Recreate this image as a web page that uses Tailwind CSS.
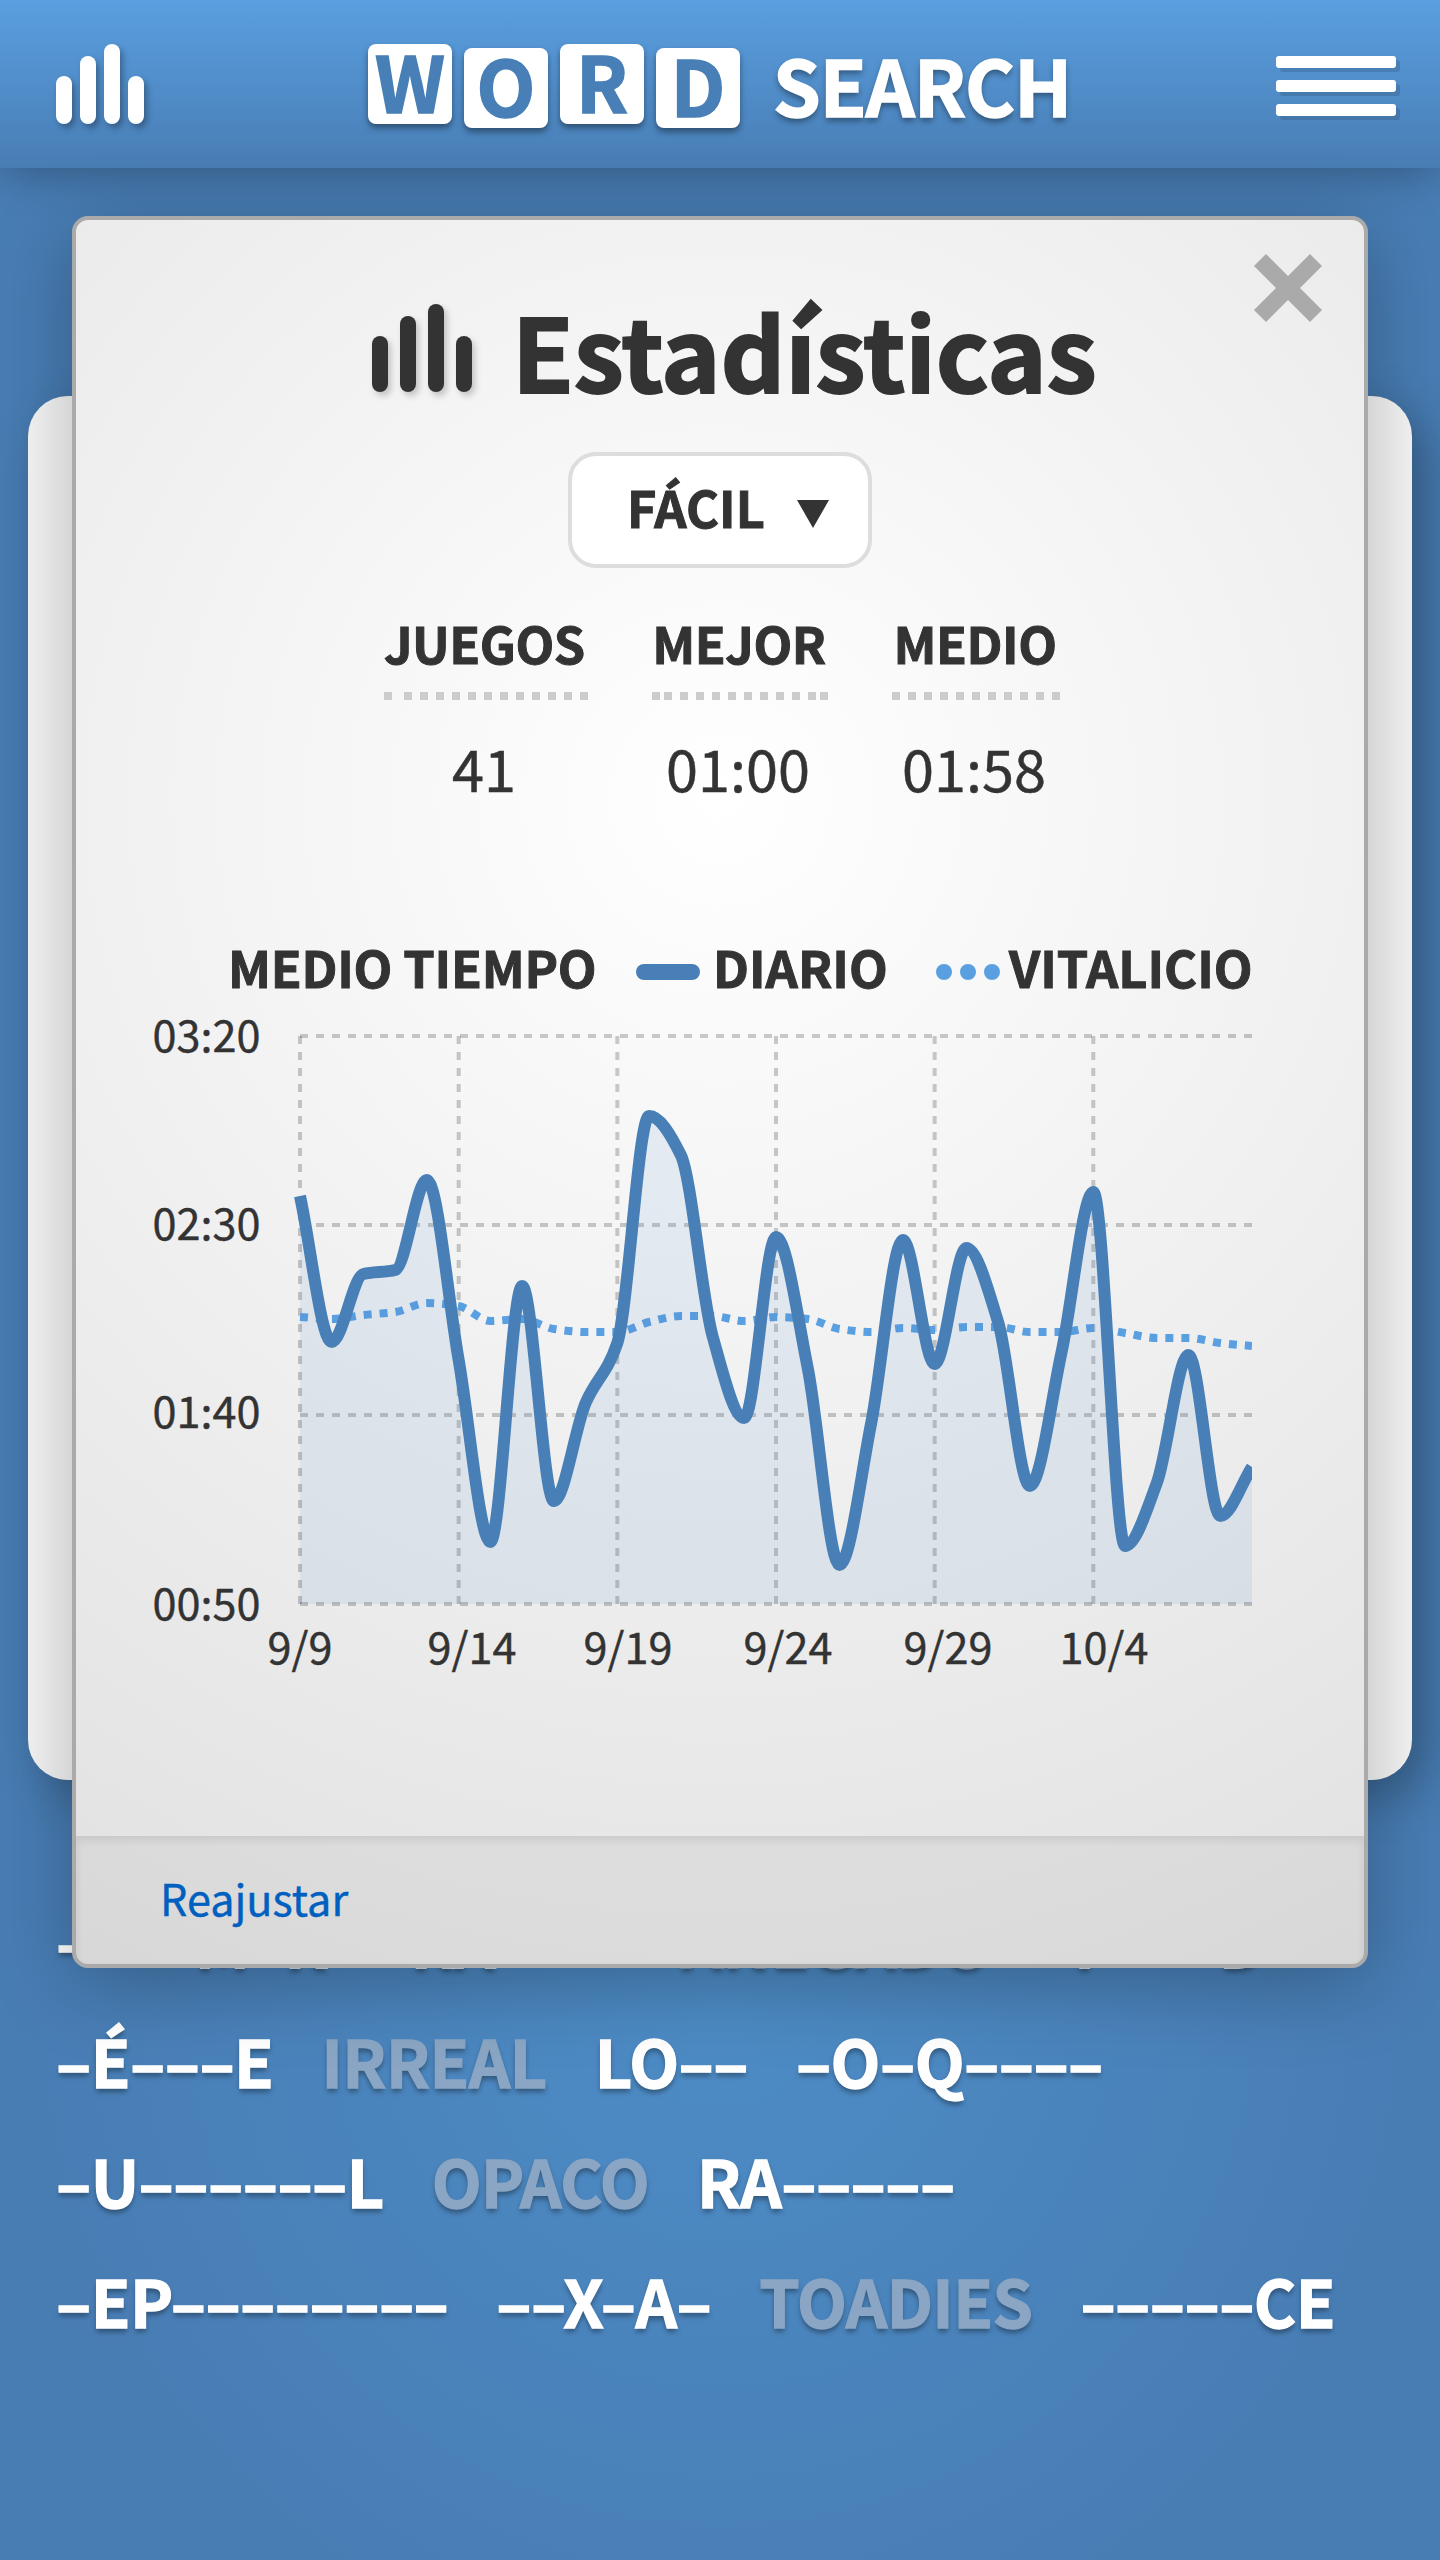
<!DOCTYPE html>
<html lang="es">
<head>
    <meta charset="UTF-8">
    <meta name="viewport" content="width=device-width, initial-scale=1.0">
    <title>Word Search - Estadísticas</title>
    <script src="https://cdn.jsdelivr.net/npm/@tailwindcss/browser@4"></script>
</head>
<body class="relative w-[1440px] h-[2560px] overflow-hidden font-['Noto_Sans_CJK_SC','Open_Sans',sans-serif] text-[#333] bg-[radial-gradient(circle_700px_at_720px_1990px,#4d8cc6,#487db4)]">

    <!-- Header -->
    <header class="relative z-10 h-[168px] flex items-start bg-linear-to-b from-[#5a9fe0] to-[#487db4] shadow-[0_8px_40px_-4px_rgba(0,0,0,0.3)]">
        <svg class="ml-14 mt-11 w-24 h-24 drop-shadow-[3px_4px_3px_rgba(0,0,0,0.3)]" viewBox="0 0 96 96" fill="#fff">
            <rect x="0" y="32" width="16" height="48" rx="8"/>
            <rect x="24" y="12" width="16" height="68" rx="8"/>
            <rect x="48" y="0" width="16" height="80" rx="8"/>
            <rect x="72" y="32" width="16" height="48" rx="8"/>
        </svg>
        <div class="ml-[216px] flex gap-3 text-[76.4px] font-bold text-[#487fb6] text-center [-webkit-text-stroke:1.6px]">
            <span class="mt-11 w-[84px] h-20 rounded-lg bg-white leading-[71px] shadow-[0_4px_6px_rgba(0,0,0,0.4)]">W</span>
            <span class="mt-12 w-[84px] h-20 rounded-lg bg-white leading-[71px] shadow-[0_4px_6px_rgba(0,0,0,0.4)]">O</span>
            <span class="mt-11 w-[84px] h-20 rounded-lg bg-white leading-[71px] shadow-[0_4px_6px_rgba(0,0,0,0.4)]">R</span>
            <span class="mt-12 w-[84px] h-20 rounded-lg bg-white leading-[71px] shadow-[0_4px_6px_rgba(0,0,0,0.4)]">D</span>
        </div>
        <h1 class="ml-[33px] text-[76.4px] leading-[167px] tracking-[-0.9px] font-bold text-white [-webkit-text-stroke:1.6px] [text-shadow:0_4px_6px_rgba(0,0,0,0.4)]">SEARCH</h1>
        <div class="ml-auto mr-11 mt-14 flex flex-col gap-3">
            <span class="w-[120px] h-3 rounded-[3px] bg-white shadow-[4px_4px_0_rgba(0,0,0,0.12)]"></span>
            <span class="w-[120px] h-3 rounded-[3px] bg-white shadow-[4px_4px_0_rgba(0,0,0,0.12)]"></span>
            <span class="w-[120px] h-3 rounded-[3px] bg-white shadow-[4px_4px_0_rgba(0,0,0,0.12)]"></span>
        </div>
    </header>

    <!-- Board -->
    <div class="mt-[228px] mx-7 h-[1384px] rounded-[40px] bg-[#f6f6f6] shadow-[16px_16px_48px_rgba(0,0,0,0.28)]"></div>

    <!-- Word list -->
    <div class="mt-[100px] ml-14 text-[64.8px] leading-[120px] tracking-[-0.55px] font-bold text-white whitespace-nowrap [-webkit-text-stroke:1.3px] [text-shadow:0_4px_5px_rgba(0,0,0,0.35)]">
        <div class="flex gap-12"><span>––––M–R</span><span>–RA––––</span><span class="text-[#8aa6c4]">ANEGADO</span><span>–P–––D––</span></div>
        <div class="flex gap-12"><span>–É–––E</span><span class="text-[#8aa6c4]">IRREAL</span><span>LO––</span><span>–O–Q––––</span></div>
        <div class="flex gap-12"><span>–U––––––L</span><span class="text-[#8aa6c4]">OPACO</span><span>RA–––––</span></div>
        <div class="flex gap-12"><span>–EP––––––––</span><span>––X–A–</span><span class="text-[#8aa6c4]">TOADIES</span><span>–––––CE</span></div>
    </div>

    <!-- Statistics dialog -->
    <div class="absolute z-20 left-[72px] top-[216px] w-[1296px] h-[1752px] flex flex-col overflow-hidden rounded-2xl border-4 border-[#aaa] bg-[radial-gradient(circle_1400px_at_644px_580px,#fff,#dedfde)] shadow-[0_16px_80px_rgba(0,0,0,0.27)]">
        <svg class="absolute right-[41px] top-[33px] w-[70px] h-[70px]" viewBox="0 0 70 70" stroke="#aaa" stroke-width="17">
            <path d="M7 7L63 63M63 7L7 63"/>
        </svg>

        <div class="mt-[84px] ml-[296px] h-[88px] flex items-start">
            <svg class="w-28 h-24 drop-shadow-[3px_4px_3px_rgba(0,0,0,0.2)]" viewBox="0 0 112 96" fill="#333">
                <rect x="0" y="32" width="16" height="56" rx="8"/>
                <rect x="28" y="12" width="16" height="76" rx="8"/>
                <rect x="56" y="0" width="16" height="88" rx="8"/>
                <rect x="84" y="32" width="16" height="56" rx="8"/>
            </svg>
            <h2 class="ml-[28px] text-[100.8px] leading-[90px] tracking-[-0.2px] font-bold [-webkit-text-stroke:2px]">Estadísticas</h2>
        </div>

        <button class="mt-[60px] mx-auto w-[304px] h-[116px] flex items-start rounded-[28px] border-4 border-[#ddd] bg-white text-[50.4px] leading-[102px] font-bold [-webkit-text-stroke:1px]">
            <span class="ml-[55px]">FÁCIL</span>
            <svg class="absolute left-[721px] top-[280px] w-8 h-7" viewBox="0 0 32 28" fill="#333"><path d="M0 0H32L16 28Z"/></svg>
        </button>

        <div class="mt-[39px] ml-[308px] flex gap-16 text-center">
            <div class="w-[204px]">
                <div class="text-[50.4px] leading-[72px] tracking-[-0.5px] font-bold text-left [-webkit-text-stroke:1px]">JUEGOS</div>
                <div class="mt-[13px] h-2 flex">
                    <span class="w-2 mr-3 bg-[#ccc]"></span>
                    <span class="flex-1 bg-[repeating-linear-gradient(90deg,#ccc_0_8px,transparent_8px_16px)]"></span>
                </div>
                <div class="mt-[35px] pr-1 text-[57.6px] leading-[64px] [-webkit-text-stroke:0.5px]">41</div>
            </div>
            <div class="w-[176px]">
                <div class="pr-0.5 text-[50.4px] leading-[72px] tracking-[-0.5px] font-bold [-webkit-text-stroke:1px]">MEJOR</div>
                <div class="mt-[13px] h-2 flex gap-1">
                    <span class="w-2 bg-[#ccc]"></span>
                    <span class="flex-1 bg-[repeating-linear-gradient(90deg,#ccc_0_8px,transparent_8px_16px)]"></span>
                    <span class="w-2 bg-[#ccc]"></span>
                </div>
                <div class="mt-[35px] pr-1 text-[57.6px] leading-[64px] [-webkit-text-stroke:0.5px]">01:00</div>
            </div>
            <div class="w-[168px]">
                <div class="pr-0.5 text-[50.4px] leading-[72px] tracking-[-0.5px] font-bold [-webkit-text-stroke:1px]">MEDIO</div>
                <div class="mt-[13px] h-2 bg-[repeating-linear-gradient(90deg,#ccc_0_8px,transparent_8px_16px)]"></div>
                <div class="mt-[35px] pr-1 text-[57.6px] leading-[64px] [-webkit-text-stroke:0.5px]">01:58</div>
            </div>
        </div>

        <!-- Legend -->
        <div class="mt-[132px] ml-[152px] h-[72px] flex items-center text-[50.4px] leading-[72px] font-bold whitespace-nowrap [-webkit-text-stroke:1px]">
            <span class="w-[408px] tracking-[-0.25px]">MEDIO TIEMPO</span>
            <span class="w-16 h-4 mt-[10px] rounded-full bg-[#487fb6]"></span>
            <span class="ml-[13px] w-[223px]">DIARIO</span>
            <span class="mt-[10px] flex gap-2">
                <span class="size-4 rounded-full bg-[#5a9fe0]"></span>
                <span class="size-4 rounded-full bg-[#5a9fe0]"></span>
                <span class="size-4 rounded-full bg-[#5a9fe0]"></span>
            </span>
            <span class="ml-[9px]">VITALICIO</span>
        </div>

        <!-- Chart -->
        <svg class="-mt-px w-[1288px] h-[700px] shrink-0" viewBox="76 1002 1288 700">
            <clipPath id="plot"><rect x="280" y="1002" width="972" height="606"/></clipPath>
            <g stroke="#000" stroke-opacity="0.2" stroke-width="4" stroke-dasharray="8 8">
                <path d="M300 1036V1604"/>
                <path d="M458.67 1036V1604"/>
                <path d="M617.33 1036V1604"/>
                <path d="M776 1036V1604"/>
                <path d="M934.67 1036V1604"/>
                <path d="M1093.33 1036V1604"/>
                <path d="M300 1036H1252"/>
                <path d="M300 1225H1252"/>
                <path d="M300 1415H1252"/>
                <path d="M300 1604H1252"/>
            </g>
            <g clip-path="url(#plot)" fill="none">
                <path id="lifetime" stroke="#5a9fe0" stroke-width="8" stroke-dasharray="8 8"/>
                <path id="area" fill="#5585d5" fill-opacity="0.11"/>
                <path id="daily" stroke="#487fb6" stroke-width="12"/>
            </g>
            <g fill="#333" font-size="43.2" stroke="#333" stroke-width="0.4">
                <text x="152.5" y="1052">03:20</text>
                <text x="152.5" y="1240">02:30</text>
                <text x="152.5" y="1428">01:40</text>
                <text x="152.5" y="1620">00:50</text>
                <g text-anchor="middle">
                    <text x="300" y="1664">9/9</text>
                    <text x="472" y="1664">9/14</text>
                    <text x="628" y="1664">9/19</text>
                    <text x="788" y="1664">9/24</text>
                    <text x="948" y="1664">9/29</text>
                    <text x="1104" y="1664">10/4</text>
                </g>
            </g>
        </svg>

        <div class="mt-auto h-32 pl-[84px] bg-black/4 shadow-[inset_0_4px_8px_rgba(0,0,0,0.09)]">
            <a href="#" class="text-[43.2px] leading-[122px] text-[#0060c0] [-webkit-text-stroke:0.4px]">Reajustar</a>
        </div>
    </div>

    <script>
        const daily = [1196, 1342, 1274, 1270, 1180, 1360, 1542, 1286, 1501, 1403, 1343, 1116, 1155, 1336, 1418, 1237,
            1368, 1565, 1423, 1240, 1364, 1248, 1322, 1486, 1352, 1192, 1546, 1483, 1355, 1516, 1467];
        const lifetime = [1317, 1319, 1315, 1312, 1303, 1306, 1321, 1319, 1329, 1332, 1332, 1322, 1316, 1316, 1321, 1317,
            1319, 1329, 1332, 1328, 1330, 1327, 1327, 1332, 1332, 1328, 1333, 1338, 1338, 1343, 1346];
        const step = 952 / 30;

        // Monotone cubic interpolation, the slope is zero at every peak
        function curve(ys) {
            const slopes = ys.map(function(y, i) {
                if (i === 0) return ys[1] - y;
                if (i === ys.length - 1) return y - ys[i - 1];
                const a = y - ys[i - 1];
                const b = ys[i + 1] - y;
                return a * b <= 0 ? 0 : 2 * a * b / (a + b);
            });
            let d = 'M300 ' + ys[0];
            for (let i = 1; i < ys.length; i++) {
                const x = 300 + i * step;
                d += 'C' + [x - step * 2 / 3, ys[i - 1] + slopes[i - 1] / 3, x - step / 3, ys[i] - slopes[i] / 3, x, ys[i]].join(' ');
            }
            return d;
        }

        document.getElementById('daily').setAttribute('d', curve(daily));
        document.getElementById('area').setAttribute('d', curve(daily) + 'V1604H300Z');
        document.getElementById('lifetime').setAttribute('d', curve(lifetime));
    </script>
</body>
</html>
